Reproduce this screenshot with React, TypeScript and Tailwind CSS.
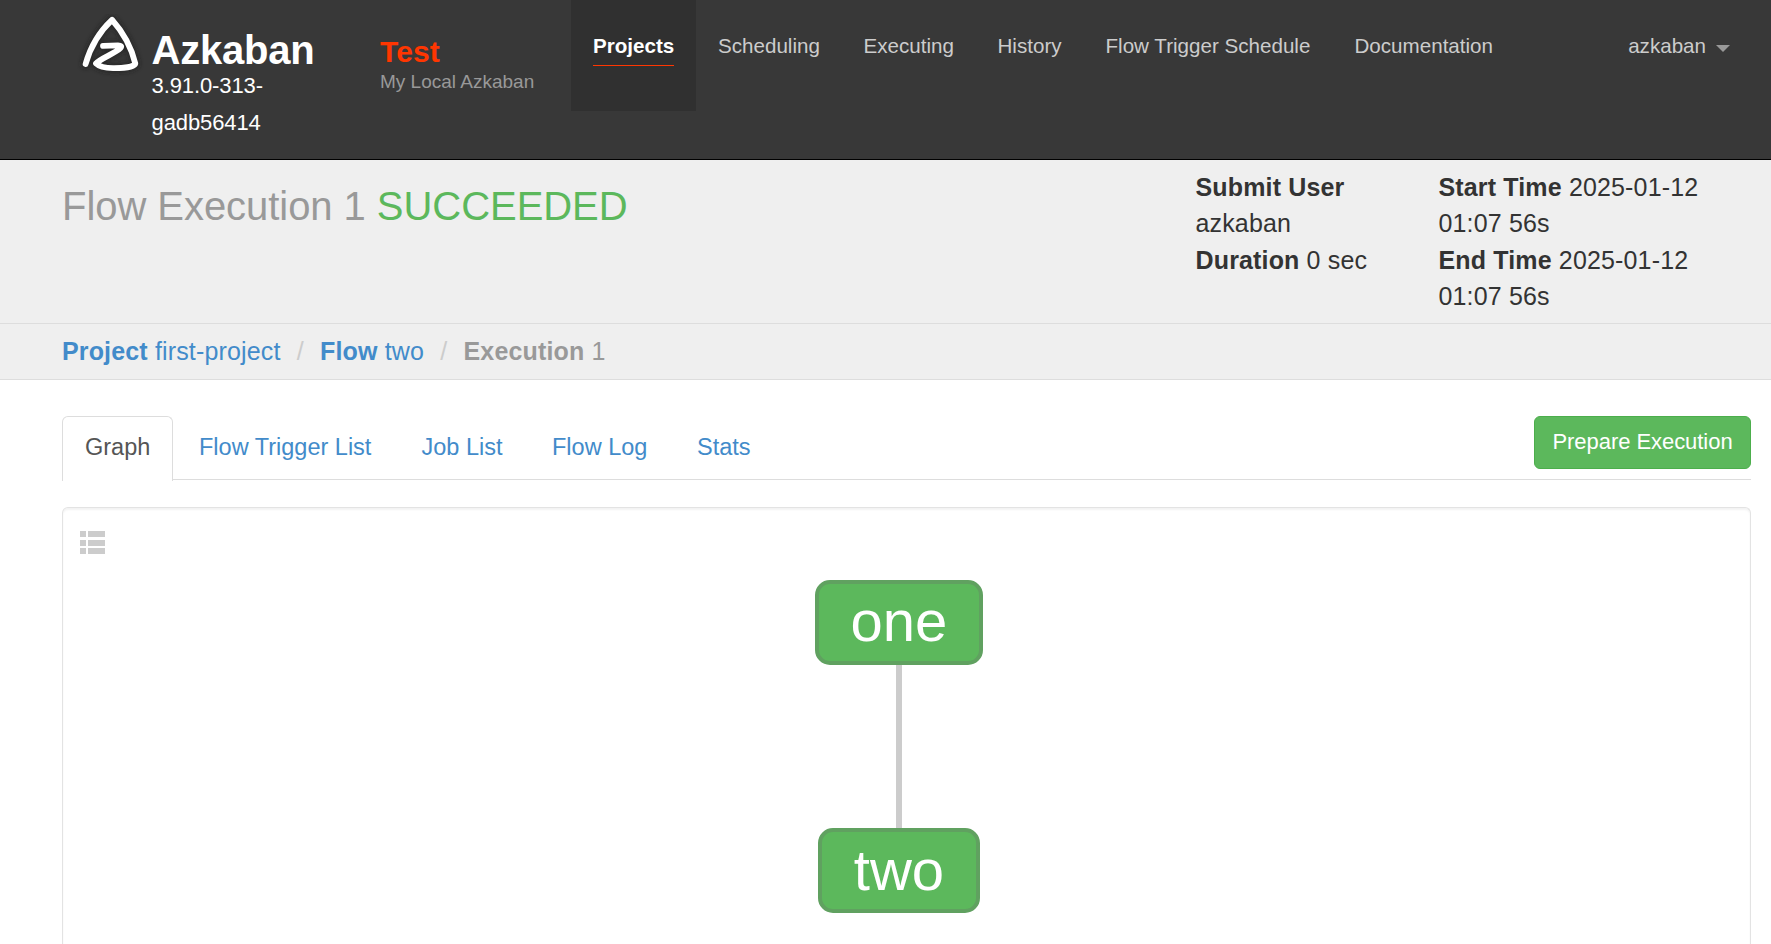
import React from "react";

const navItems = [
  { label: "Scheduling", width: "w-[145.5px]" },
  { label: "Executing", width: "w-[134px]" },
  { label: "History", width: "w-[108px]" },
  { label: "Flow Trigger Schedule", width: "w-[249px]" },
  { label: "Documentation", width: "w-[190px]" },
];

function Logo() {
  const d = "M8.6 50 C13 34 22 18 35 5.8 C45 17 54 32 58.3 49.5 C57.5 53 46 54.3 36 54.2 C29 54 22 52.5 19 49.5 C24 44 38 39.5 43.5 34 Q45.5 31.5 41 31.4 L26 31.8";
  return (
    <svg viewBox="0 0 70 64" className="h-16 w-[70px] shrink-0" fill="none" strokeLinecap="round" strokeLinejoin="round">
      <defs>
        <filter id="halo" x="-30%" y="-30%" width="160%" height="160%">
          <feGaussianBlur stdDeviation="2.2" />
        </filter>
      </defs>
      <path d={d} stroke="#1c1c1c" strokeWidth="9" opacity="0.6" filter="url(#halo)" />
      <path d={d} stroke="#fff" strokeWidth="5.8" />
    </svg>
  );
}

function Header() {
  return (
    <header className="flex h-40 shrink-0 border-b border-black bg-[#383838]">
      <div className="flex w-[380px] pl-[77px] pt-[14px]">
        <Logo />
        <div className="pl-[4.5px] pt-[14px] text-white">
          <div className="text-[40px] font-bold leading-[44px] tracking-[-0.2px]">Azkaban</div>
          <div className="-mt-[5px] w-[150px] text-[22px] leading-[37px] tracking-[-0.1px]">3.91.0-313-gadb56414</div>
        </div>
      </div>
      <div className="w-[191px] pt-[34px]">
        <div className="text-[30px] font-bold leading-[35px] tracking-[0.1px] text-[#ff3601]">Test</div>
        <div className="pt-px text-[19px] leading-[24px] text-[#999]">My Local Azkaban</div>
      </div>
      <nav className="flex flex-1 text-[20.6px] leading-[30px] text-[#ccc]">
        <div className="h-[111px] w-[125px] bg-[#303030] pl-[22px] pt-[31px]">
          <span className="inline-block h-[35px] w-[81px] whitespace-nowrap border-b border-[#ff3601] font-bold text-white">Projects</span>
        </div>
        {navItems.map((n) => (
          <div key={n.label} className={`${n.width} whitespace-nowrap pl-[22px] pt-[31px]`}>
            {n.label}
          </div>
        ))}
        <div className="ml-auto flex pr-[41px] pt-[31px]">
          azkaban
          <span className="ml-[10px] mt-[14px] h-0 w-0 border-x-[7px] border-t-[7px] border-x-transparent border-t-[#999]" />
        </div>
      </nav>
    </header>
  );
}

function Summary() {
  return (
    <section className="flex h-[164px] shrink-0 border-b border-[#ddd] bg-[#efefef]">
      <h1 className="w-[1195.5px] shrink-0 pl-[62px] pt-[22px] text-[40px] leading-[48px] tracking-[-0.05px] text-[#999]">
        Flow Execution 1 <span className="text-[#5cb85c]">SUCCEEDED</span>
      </h1>
      <div className="w-[243px] shrink-0 pt-[9px] text-[25px] leading-[36.4px] tracking-[0.15px] text-[#333]">
        <p><b>Submit User</b><br />azkaban</p>
        <p><b>Duration</b> 0 sec</p>
      </div>
      <div className="w-[300px] shrink-0 pt-[9px] text-[25px] leading-[36.4px] tracking-[0.15px] text-[#333]">
        <p><b>Start Time</b> 2025-01-12<br />01:07 56s</p>
        <p><b>End Time</b> 2025-01-12<br />01:07 56s</p>
      </div>
    </section>
  );
}

function Breadcrumb() {
  return (
    <div className="flex h-14 shrink-0 border-b border-[#ddd] bg-[#efefef] pl-[62px] pt-[9px] text-[25px] leading-[36px] tracking-[0.15px] text-[#428bca]">
      <span><b>Project</b> first-project</span>
      <span className="w-[39.5px] text-center text-[#ccc]">/</span>
      <span><b>Flow</b> two</span>
      <span className="w-[39.5px] text-center text-[#ccc]">/</span>
      <span className="text-[#999]"><b>Execution</b> 1</span>
    </div>
  );
}

function Tabs() {
  return (
    <div className="mt-9 flex h-16 shrink-0 border-b border-[#ddd] text-[23.5px] leading-[34px] text-[#428bca]">
      <div className="h-[65px] w-[111px] rounded-t-[6px] border border-b-0 border-[#ddd] bg-white pl-[22px] pt-[13px] text-[#555]">Graph</div>
      <div className="w-[248.5px] pl-[26px] pt-[14px]">Flow Trigger List</div>
      <div className="w-[130.5px] pt-[14px]">Job List</div>
      <div className="w-[145px] pt-[14px]">Flow Log</div>
      <div className="pt-[14px]">Stats</div>
      <button className="ml-auto h-[53px] w-[217px] rounded-[6px] border border-[#4cae4c] bg-[#5cb85c] pb-px text-[22px] tracking-[-0.05px] text-white">Prepare Execution</button>
    </div>
  );
}

function Graph() {
  return (
    <div className="relative mt-[27px] flex-1 rounded-t-[6px] border border-b-0 border-[#e3e3e3] shadow-[inset_0_2px_2px_rgba(0,0,0,0.05)]">
      <svg className="absolute left-[17px] top-[23px]" width="26" height="24" fill="#ccc">
        <path d="M0 0h6v6H0zM8 0h17v6H8zM0 9h6v6H0zM8 9h17v6H8zM0 17h6v6H0zM8 17h17v6H8z" />
      </svg>
      <div className="absolute left-[833px] top-[157px] h-[164px] w-[6px] bg-[#ccc]" />
      <div className="absolute left-[752px] top-[71.5px] flex h-[85.5px] w-[168px] items-center justify-center rounded-[15px] border-4 border-[#60a160] bg-[#5cb85c] pb-[2px] text-[58px] leading-none text-white">one</div>
      <div className="absolute left-[755px] top-[320px] flex h-[85px] w-[162px] items-center justify-center rounded-[15px] border-4 border-[#60a160] bg-[#5cb85c] pb-[2px] text-[58px] leading-none text-white">two</div>
    </div>
  );
}

export default function App() {
  return (
    <div className="flex h-[944px] w-[1771px] flex-col overflow-hidden bg-white font-['Liberation_Sans',Arial,sans-serif]">
      <Header />
      <Summary />
      <Breadcrumb />
      <main className="flex flex-1 flex-col pl-[62px] pr-5">
        <Tabs />
        <Graph />
      </main>
    </div>
  );
}
